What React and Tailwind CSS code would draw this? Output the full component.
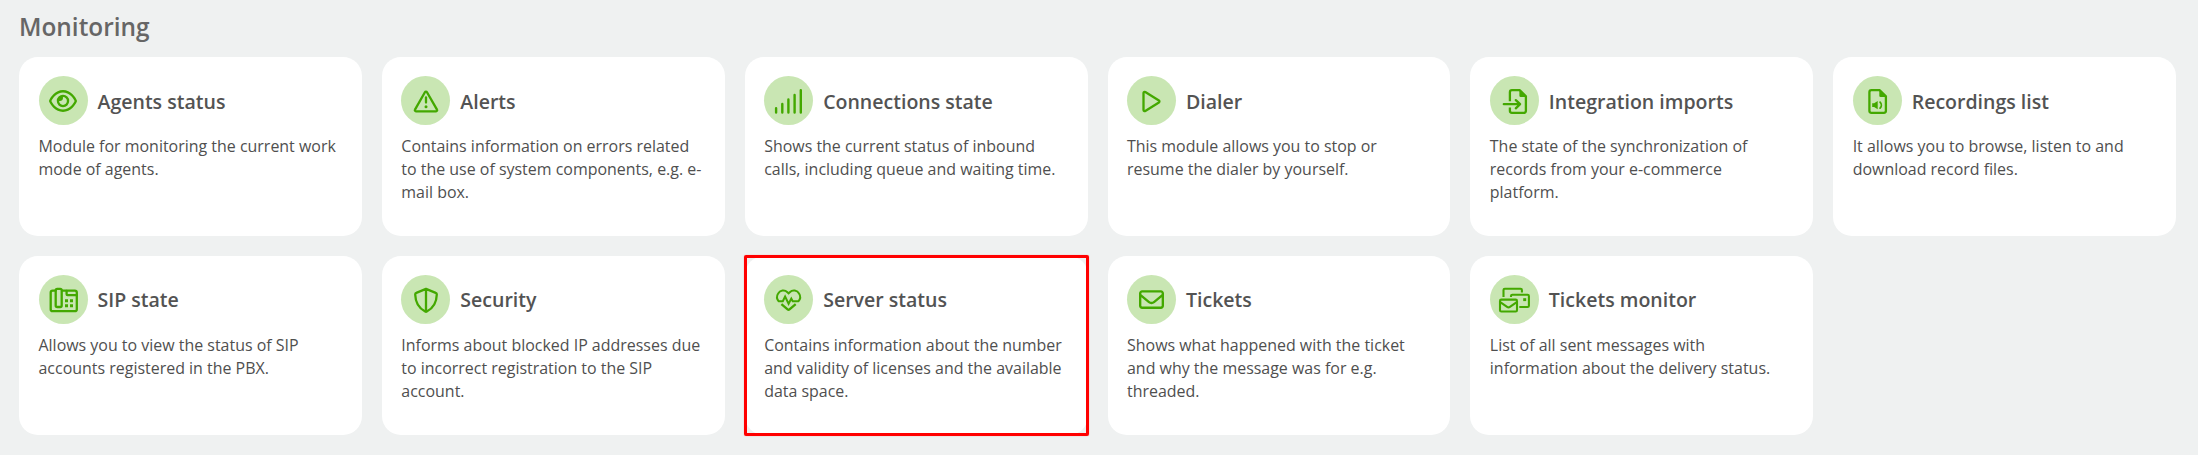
import { FaRegEye, FaRegEnvelope } from 'react-icons/fa6'

function Icone({ children }) {
  return (
    <svg
      viewBox="0 0 49 49"
      className="size-full"
      fill="none"
      stroke="currentColor"
      strokeWidth="2.3"
      strokeLinecap="round"
      strokeLinejoin="round"
    >
      {children}
    </svg>
  )
}

function AlertIcon() {
  return (
    <Icone>
      <path d="M23.9 16.2a1.2 1.2 0 0 1 2.1 0l10 17.4a1.1 1.1 0 0 1-1 1.7H15a1.1 1.1 0 0 1-1-1.7z" />
      <path d="M25 21.5v5" />
      <circle cx="25" cy="30.8" r="1.5" fill="currentColor" stroke="none" />
    </Icone>
  )
}

function SignalIcon() {
  return (
    <Icone>
      <path strokeWidth="2.4" d="M12.1 32.2v4.4M18.3 28v8.6M24.4 23.5v13.1M30.6 19v17.6M36.8 14.3v22.3" />
    </Icone>
  )
}

function PlayIcon() {
  return (
    <Icone>
      <path d="M16.5 17.1a1.2 1.2 0 0 1 1.8-1l13.6 8.4a1.2 1.2 0 0 1 0 2L18.3 35a1.2 1.2 0 0 1-1.8-1z" />
    </Icone>
  )
}

function ImportIcon() {
  return (
    <Icone>
      <path strokeLinecap="butt" d="M19.9 25.2v-9a2 2 0 0 1 2-2h8l6 6.1v14.5a2 2 0 0 1-2 2h-12a2 2 0 0 1-2-2v-3.3" />
      <path fill="currentColor" stroke="none" d="M29.4 13.5v6.2a1.2 1.2 0 0 0 1.2 1.2h6z" />
      <path d="M13.8 28.2h16M25.8 24.1l4.3 4.1-4.3 4.1" />
    </Icone>
  )
}

function AudioFileIcon() {
  return (
    <Icone>
      <path d="M16.4 16.2a2 2 0 0 1 2-2h8.4l6.1 6.1v14.5a2 2 0 0 1-2 2H18.4a2 2 0 0 1-2-2z" />
      <path fill="currentColor" stroke="none" d="M26.3 13.5v6.2a1.2 1.2 0 0 0 1.2 1.2h6z" />
      <path fill="currentColor" stroke="none" d="M19.2 27.3h1.9l3.6-2.3v8.2l-3.6-2.3h-1.9z" />
      <path strokeWidth="1.8" d="M27.1 26.2c1.6 1.6 1.6 4.3 0 5.9" />
    </Icone>
  )
}

function PhoneIcon() {
  return (
    <Icone>
      <path d="M16.7 15.6h-3a2 2 0 0 0-2 2v16.6a2 2 0 0 0 2 2h22.1a2 2 0 0 0 2-2V17.6a2 2 0 0 0-2-2H23" />
      <rect x="16.7" y="13.8" width="6" height="18.2" rx="1.5" />
      <path d="M27.6 15.8v3.4a1 1 0 0 0 1 1h9" />
      <path
        fill="currentColor"
        stroke="none"
        d="M26 24.3h3v2.9h-3zM31 24.3h3v2.9h-3zM26 29.3h3v2.9h-3zM31 29.3h3v2.9h-3z"
      />
    </Icone>
  )
}

function ShieldIcon() {
  return (
    <Icone>
      <path d="M25 13.9l9.7 4a1.7 1.7 0 0 1 1.1 1.6c-.2 6.7-2.9 13.4-10 17a1.7 1.7 0 0 1-1.6 0c-7.1-3.6-9.8-10.3-10-17a1.7 1.7 0 0 1 1.1-1.6zM25 13.9v22.6" />
    </Icone>
  )
}

function HeartIcon() {
  return (
    <Icone>
      <path
        strokeWidth="2"
        strokeLinejoin="miter"
        d="M14.6 26.2h4.2l2.3-4.6 3.5 7.2 2.7-5.2 1.4 2.6h5.8M14.6 26.2c-1.6-2-2-5.2-.6-7.5 2-3.6 6.6-4.3 9.4-1.5l1.2 1.2 1.2-1.2c2.8-2.8 7.4-2.1 9.4 1.5 1.4 2.3 1 5.5-.7 7.5"
      />
      <path strokeLinecap="butt" d="M17.4 29.1l6.2 5.3a1.4 1.4 0 0 0 1.9 0l6.2-5.3" />
    </Icone>
  )
}

function MailsIcon() {
  return (
    <Icone>
      <g strokeWidth="2.1" strokeLinecap="butt">
        <path d="M13.5 22v-7a1.3 1.3 0 0 1 1.3-1.3h15.8a1.3 1.3 0 0 1 1.3 1.3v2.6" />
        <path d="M21 22v-1a1.3 1.3 0 0 1 1.3-1.3h15.3a1.3 1.3 0 0 1 1.3 1.3v9.7a1.3 1.3 0 0 1-1.3 1.3h-8.3" />
        <rect x="10" y="24.6" width="17" height="11.9" rx="1.3" />
        <path d="M10.2 27.2l6.9 4.7a2.4 2.4 0 0 0 2.8 0l6.9-4.7" />
      </g>
      <path fill="currentColor" stroke="none" d="M33.2 23.2h3v2.9h-3z" />
    </Icone>
  )
}

const modules = [
  { title: 'Agents status', icon: <FaRegEye className="size-[28px]" />, text: 'Module for monitoring the current work mode of agents.' },
  { title: 'Alerts', icon: <AlertIcon />, text: 'Contains information on errors related to the use of system components, e.g. e-mail box.' },
  { title: 'Connections state', icon: <SignalIcon />, text: 'Shows the current status of inbound calls, including queue and waiting time.' },
  { title: 'Dialer', icon: <PlayIcon />, text: 'This module allows you to stop or resume the dialer by yourself.' },
  { title: 'Integration imports', icon: <ImportIcon />, text: 'The state of the synchronization of records from your e-commerce platform.' },
  { title: 'Recordings list', icon: <AudioFileIcon />, text: 'It allows you to browse, listen to and download record files.' },
  { title: 'SIP state', icon: <PhoneIcon />, text: 'Allows you to view the status of SIP accounts registered in the PBX.' },
  { title: 'Security', icon: <ShieldIcon />, text: 'Informs about blocked IP addresses due to incorrect registration to the SIP account.' },
  { title: 'Server status', icon: <HeartIcon />, text: 'Contains information about the number and validity of licenses and the available data space.', selected: true },
  { title: 'Tickets', icon: <FaRegEnvelope className="size-[25px]" />, text: 'Shows what happened with the ticket and why the message was for e.g. threaded.' },
  { title: 'Tickets monitor', icon: <MailsIcon />, text: 'List of all sent messages with information about the delivery status.' },
]

function ModuleCard({ title, icon, text, selected }) {
  return (
    <div className="relative h-[179px] rounded-[19px] bg-white px-[19.5px] pt-[19px]">
      <div className="flex items-center gap-[10px]">
        <div className="flex size-[49px] shrink-0 items-center justify-center rounded-full bg-[#c9e6b3] text-[#43a800]">
          {icon}
        </div>
        <h2 className="pt-0.5 text-[19.55px] leading-7 font-semibold text-[#535353]">{title}</h2>
      </div>
      <p className="mt-2.5 text-[15.96px] leading-[23px] text-[#4f4f4f]">{text}</p>
      {selected && (
        <div className="absolute -inset-px rounded-[2px] border-[3px] border-[#ff0000] shadow-[0_0_1px_#ff000080]" />
      )}
    </div>
  )
}

function App() {
  return (
    <main className="h-[455px] bg-[#eff1f1] pt-[9px] pr-[22px] pl-[19px] font-['Open_Sans',sans-serif]">
      <h1 className="text-[24.4px] leading-[36px] font-semibold text-[#666]">Monitoring</h1>
      <div className="mt-3 grid grid-cols-6 gap-x-5 gap-y-[19.5px]">
        {modules.map((item) => (
          <ModuleCard key={item.title} {...item} />
        ))}
      </div>
    </main>
  )
}

export default App
